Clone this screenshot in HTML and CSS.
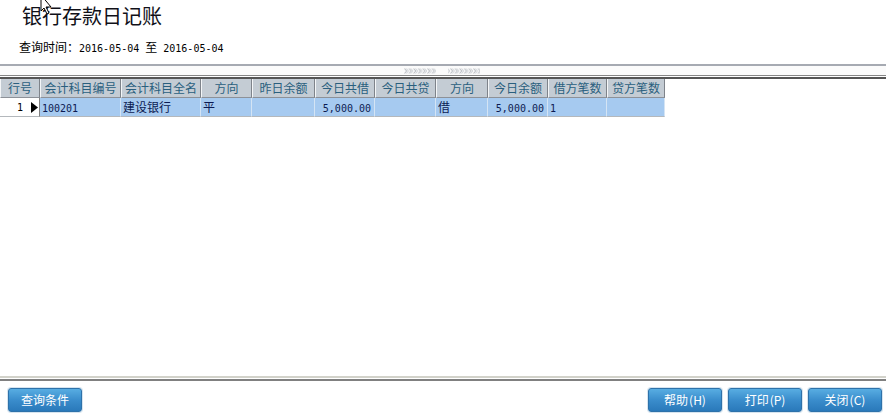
FILE: index.html
```html
<!DOCTYPE html>
<html lang="zh-CN">
<head>
<meta charset="utf-8">
<title>银行存款日记账</title>
<link rel="stylesheet" href="styles.css">
</head>
<body>
<div class="page">
  <svg class="cursor" width="14" height="16" viewBox="0 0 14 16"><polygon points="1,-5 1,11 4,8 7,14 9,13 6,7 11,7" fill="#fff" stroke="#000" stroke-width="1"/></svg>
  <header class="top">
    <h1 class="title">银行存款日记账</h1>
    <div class="query">查询时间：<span class="num">2016-05-04 </span>至<span class="num"> 2016-05-04</span></div>
  </header>
  <div class="splitter">
    <svg class="grip" width="78" height="6" viewBox="0 0 78 6">
      <defs>
        <pattern id="chev" width="4.6" height="6" patternUnits="userSpaceOnUse">
          <polyline points="0.5,0.5 2.5,3 0.5,5.5" fill="none" stroke="#b8bcc2" stroke-width="1"/>
          <polyline points="2.3,0.5 4.3,3 2.3,5.5" fill="none" stroke="#d0d3d8" stroke-width="1"/>
        </pattern>
      </defs>
      <rect x="0" y="0" width="32" height="6" fill="url(#chev)"/>
      <rect x="44" y="0" width="32" height="6" fill="url(#chev)"/>
    </svg>
  </div>
  <div class="sep2"></div>
  <main class="area">
    <div class="grid">
      <div class="th">行号</div>
      <div class="th">会计科目编号</div>
      <div class="th">会计科目全名</div>
      <div class="th">方向</div>
      <div class="th">昨日余额</div>
      <div class="th">今日共借</div>
      <div class="th">今日共贷</div>
      <div class="th">方向</div>
      <div class="th">今日余额</div>
      <div class="th">借方笔数</div>
      <div class="th">贷方笔数</div>

      <div class="td ind"><span class="num">1</span><svg class="tri" width="7" height="11" viewBox="0 0 7 11"><polygon points="0,0 7,5.5 0,11" fill="#000"/></svg></div>
      <div class="td"><span class="num">100201</span></div>
      <div class="td">建设银行</div>
      <div class="td">平</div>
      <div class="td"></div>
      <div class="td r"><span class="num">5,000.00</span></div>
      <div class="td"></div>
      <div class="td">借</div>
      <div class="td r"><span class="num">5,000.00</span></div>
      <div class="td"><span class="num">1</span></div>
      <div class="td"></div>
    </div>
  </main>
  <div class="foot-rule"></div>
  <footer class="foot">
    <button class="btn">查询条件</button>
    <div class="btns">
      <button class="btn">帮助<span class="key">(H)</span></button>
      <button class="btn">打印<span class="key">(P)</span></button>
      <button class="btn">关闭<span class="key">(C)</span></button>
    </div>
  </footer>
</div>
</body>
</html>
```

FILE: styles.css
```css
html, body {
  margin: 0;
  padding: 0;
  background: #fff;
}
body {
  font-family: "Noto Sans CJK SC", "Liberation Sans", sans-serif;
}
.page {
  position: relative;
  height: 415px;
  display: flex;
  flex-direction: column;
  overflow: hidden;
}
.cursor {
  position: absolute;
  left: 40px;
  top: 0;
}
.top {
  height: 64px;
  flex: none;
}
.title {
  margin: 0;
  padding: 2px 0 0 22px;
  font-size: 20px;
  line-height: 28px;
  font-weight: normal;
  color: #101018;
}
.query {
  margin-top: 10px;
  padding-left: 19px;
  font-size: 12px;
  line-height: 14px;
  color: #000;
}
.num {
  font-family: "DejaVu Sans Mono", "Liberation Mono", monospace;
  font-size: 10px;
  white-space: pre;
}
.splitter {
  flex: none;
  height: 9px;
  border-top: 2px solid #a6aab2;
  border-bottom: 1px solid #868686;
  background: #fbfbfb;
  display: flex;
  justify-content: center;
  align-items: center;
}
.grip {
  display: block;
}
.sep2 {
  flex: none;
  height: 1px;
  background: #fff;
  border-bottom: 2px solid #555;
}
.area {
  flex: 1;
  background: #fff;
}
.grid {
  display: grid;
  grid-template-columns: 40px 81px 80px 51px 63px 60px 61px 52px 60px 59px 58px;
  grid-template-rows: 19px 19px;
  width: 665px;
}
.th {
  box-sizing: border-box;
  background: #c4ccd4;
  color: #2a5f7e;
  font-size: 12px;
  line-height: 17px;
  text-align: center;
  white-space: nowrap;
  overflow: hidden;
  border-left: 1px solid #f4f6f8;
  border-right: 1px solid #7e838a;
  border-bottom: 1px solid #8d9198;
}
.td {
  box-sizing: border-box;
  background: #a6caf0;
  color: #0c1a52;
  font-size: 12px;
  line-height: 18px;
  padding-left: 2px;
  white-space: nowrap;
  overflow: hidden;
  border-right: 1px solid #d4e4f4;
  border-bottom: 1px solid #b4b8bc;
}
.td.r {
  text-align: right;
  padding-right: 3px;
}
.td.ind {
  background: #fff;
  color: #000;
  border-right: 1px solid #808080;
  display: flex;
  align-items: center;
  padding-left: 17px;
}
.td.ind .num {
  line-height: 11px;
}
.tri {
  margin-left: 8px;
}
.foot-rule {
  flex: none;
  height: 1px;
  background: #fff;
  border-top: 2px solid #d2d2ca;
  border-bottom: 2px solid #808080;
}
.foot {
  flex: none;
  display: flex;
  justify-content: space-between;
  align-items: flex-start;
  padding: 7px 4px 3px 8px;
}
.btns {
  display: flex;
  gap: 6px;
}
.btn {
  box-sizing: border-box;
  width: 74px;
  height: 24px;
  padding: 0;
  border: 1px solid #2e72aa;
  border-radius: 3px;
  background: linear-gradient(#58ade2, #3a8dcc 50%, #2a79ba);
  box-shadow: 0 0 0 1px #d6e4ef;
  color: #fff;
  font-family: "Noto Sans CJK SC", sans-serif;
  font-size: 12px;
  line-height: 22px;
  cursor: pointer;
}
.key {
  margin-left: 1px;
  font-size: 12px;
}
```
